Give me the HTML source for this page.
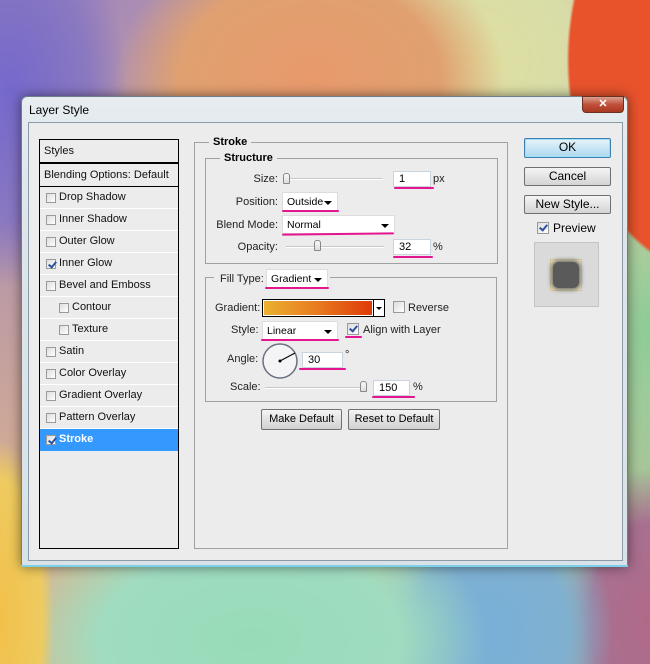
<!DOCTYPE html>
<html><head><style>
*{margin:0;padding:0;box-sizing:border-box}
body{width:650px;height:664px;overflow:hidden;position:relative;font-family:"Liberation Sans",sans-serif;font-size:11px;color:#000;
background:
radial-gradient(ellipse 155px 220px at 720px 60px,#e8532c 0,#e8532c 97%,transparent 99%),
radial-gradient(ellipse 260px 200px at 310px 80px,#e89a6c 0,#e0a070 50%,transparent 75%),
radial-gradient(ellipse 220px 200px at 470px 60px,#dfe0a0 0,#d8dca8 50%,transparent 80%),
radial-gradient(ellipse 130px 220px at 10px 90px,#7468cc 0,#8a78c0 60%,transparent 90%),
radial-gradient(ellipse 60px 200px at 0px 620px,#f2c04a 0,#eecb60 70%,transparent 90%),
radial-gradient(ellipse 250px 150px at 250px 640px,#96dcb8 0,#a0dcc0 60%,transparent 95%),
radial-gradient(ellipse 130px 150px at 490px 630px,#78b0d8 0,#80b0d0 60%,transparent 95%),
radial-gradient(ellipse 100px 160px at 650px 620px,#b06a88 0,#a87090 60%,transparent 95%),
radial-gradient(ellipse 80px 200px at 650px 330px,#8ccc98 0,transparent 90%),
linear-gradient(135deg,#9a80c0,#d8b090 40%,#c8d0a0 70%,#90b890);}
.a{position:absolute}
.frame{left:21px;top:96px;width:607px;height:471px;border-radius:6px 6px 3px 3px;background:linear-gradient(180deg,#e6ecf0,#dde5ea 30%,#d8e2e8);border:1px solid #6d7f8c;box-shadow:0 0 12px rgba(0,0,0,.5);}
.frame:after{content:"";position:absolute;left:-1px;right:-1px;bottom:-1px;height:4px;border-bottom:2px solid #7cd0e8}
.panel{left:28px;top:122px;width:595px;height:439px;background:#ececec;border:1px solid #8a9aa6;}
.title{left:29px;top:103px;font-size:12px;color:#000}
.close{left:582px;top:96px;width:42px;height:17px;border-radius:0 0 4px 4px;background:linear-gradient(#dba091,#c0503a 50%,#a83820);border:1px solid #6a3020;color:#fff;font-weight:bold;font-size:11px;text-align:center;line-height:15px}
.list{left:39px;top:139px;width:140px;height:410px;border:1px solid #000;background:#ececec}
.row{position:absolute;left:0;width:138px;height:22px;border-bottom:1px solid #fff;line-height:21px;padding-left:19px;font-size:11px;color:#111}
.cb{position:absolute;width:10px;height:10px;border:1px solid #9a9a9a;background:linear-gradient(135deg,#ddd,#fff)}
.cb.on:after{content:"";position:absolute;left:3px;top:0px;width:3px;height:6px;border:solid #2c4fa0;border-width:0 2px 2px 0;transform:rotate(40deg)}
.grp{border:1px solid #a0a0a0}
.lg{position:absolute;background:#ececec;font-weight:bold;font-size:11px;padding:0 4px;line-height:12px}
.lbl{position:absolute;font-size:11px;color:#222;text-align:right;line-height:12px}
.inp{position:absolute;background:#fff;border:1px solid #c8d4e0;font-size:11px;padding-left:5px;line-height:14px}
.dd{position:absolute;background:#fff;border:1px solid #ddd;font-size:10.5px;padding-left:4px;line-height:18px}
.dd:after{content:"";position:absolute;right:5px;top:8px;border:4px solid transparent;border-top:4px solid #000;border-bottom:0}
.ul{position:absolute;height:2px;background:#e3158f;border-radius:1px}
.track{position:absolute;height:2px;background:#c8c8c8;border-bottom:1px solid #fff}
.thumb{position:absolute;width:7px;height:11px;border:1px solid #888;border-radius:3px 3px 1px 1px;background:linear-gradient(#fafafa,#ddd)}
.btn{position:absolute;border:1px solid #707070;border-radius:2px;background:linear-gradient(#f4f4f4,#e4e4e4 50%,#d4d4d4);text-align:center;font-size:12px;line-height:17px;color:#000}
.sbtn{position:absolute;border:1px solid #707070;border-radius:2px;background:linear-gradient(#f4f4f4,#e2e2e2 50%,#d2d2d2);text-align:center;font-size:11px;line-height:19px}
</style></head><body>
<div class="a frame"></div>
<div class="a title">Layer Style</div>
<div class="a close">✕</div>
<div class="a panel"></div>

<div class="a list">
<div class="row" style="top:0;height:24px;padding-left:4px;border-bottom:2px solid #000;line-height:22px">Styles</div>
<div class="row" style="top:25px;height:22px;padding-left:4px;border-bottom:1px solid #000;line-height:21px">Blending Options: Default</div>
<div class="row" style="top:47px"><span class="cb" style="left:6px;top:6px"></span>Drop Shadow</div>
<div class="row" style="top:69px"><span class="cb" style="left:6px;top:6px"></span>Inner Shadow</div>
<div class="row" style="top:91px"><span class="cb" style="left:6px;top:6px"></span>Outer Glow</div>
<div class="row" style="top:113px"><span class="cb on" style="left:6px;top:6px"></span>Inner Glow</div>
<div class="row" style="top:135px"><span class="cb" style="left:6px;top:6px"></span>Bevel and Emboss</div>
<div class="row" style="top:157px;padding-left:32px"><span class="cb" style="left:19px;top:6px"></span>Contour</div>
<div class="row" style="top:179px;padding-left:32px"><span class="cb" style="left:19px;top:6px"></span>Texture</div>
<div class="row" style="top:201px"><span class="cb" style="left:6px;top:6px"></span>Satin</div>
<div class="row" style="top:223px"><span class="cb" style="left:6px;top:6px"></span>Color Overlay</div>
<div class="row" style="top:245px"><span class="cb" style="left:6px;top:6px"></span>Gradient Overlay</div>
<div class="row" style="top:267px"><span class="cb" style="left:6px;top:6px"></span>Pattern Overlay</div>
<div class="row" style="top:289px;background:#3399ff;color:#fff;font-weight:bold;border-bottom:none"><span class="cb on" style="left:6px;top:6px"></span>Stroke</div>
</div>

<div class="a grp" style="left:194px;top:142px;width:314px;height:407px"></div>
<div class="lg" style="left:209px;top:136px">Stroke</div>
<div class="a grp" style="left:205px;top:158px;width:293px;height:106px"></div>
<div class="lg" style="left:220px;top:152px">Structure</div>

<div class="lbl" style="left:200px;width:78px;top:173px">Size:</div>
<div class="track" style="left:285px;top:178px;width:98px"></div>
<div class="thumb" style="left:283px;top:173px"></div>
<div class="inp" style="left:393px;top:171px;width:38px;height:16px">1</div>
<div class="lbl" style="left:433px;top:173px">px</div>
<div class="ul" style="left:394px;top:187px;width:40px"></div>

<div class="lbl" style="left:200px;width:78px;top:196px">Position:</div>
<div class="dd" style="left:282px;top:192px;width:56px;height:19px">Outside</div>
<div class="ul" style="left:282px;top:210px;width:57px"></div>

<div class="lbl" style="left:200px;width:78px;top:219px">Blend Mode:</div>
<div class="dd" style="left:282px;top:215px;width:113px;height:19px">Normal</div>
<div class="ul" style="left:282px;top:233px;width:112px;transform:rotate(-0.6deg)"></div>

<div class="lbl" style="left:200px;width:78px;top:241px">Opacity:</div>
<div class="track" style="left:286px;top:246px;width:98px"></div>
<div class="thumb" style="left:314px;top:240px"></div>
<div class="inp" style="left:393px;top:239px;width:38px;height:16px">32</div>
<div class="lbl" style="left:433px;top:241px">%</div>
<div class="ul" style="left:393px;top:256px;width:40px"></div>

<div class="a grp" style="left:205px;top:277px;width:292px;height:125px"></div>
<div class="a" style="left:214px;top:270px;width:116px;height:20px;background:#ececec"></div>
<div class="lbl" style="left:220px;top:273px">Fill Type:</div>
<div class="dd" style="left:266px;top:269px;width:62px;height:19px">Gradient</div>
<div class="ul" style="left:265px;top:287px;width:64px"></div>

<div class="lbl" style="left:215px;top:302px">Gradient:</div>
<div class="a" style="left:262px;top:299px;width:123px;height:18px;border:1px solid #000;background:#fff"></div>
<div class="a" style="left:264px;top:301px;width:108px;height:14px;background:linear-gradient(90deg,#ebb030,#e87a20 50%,#de3a08)"></div>
<div class="a" style="left:373px;top:300px;width:1px;height:16px;background:#000"></div>
<div class="a" style="left:376px;top:307px;border:3px solid transparent;border-top:3px solid #000;border-bottom:0"></div>
<span class="cb" style="left:393px;top:301px;width:12px;height:12px"></span>
<div class="lbl" style="left:408px;top:302px">Reverse</div>

<div class="lbl" style="left:231px;top:324px">Style:</div>
<div class="dd" style="left:262px;top:321px;width:76px;height:19px">Linear</div>
<div class="ul" style="left:261px;top:339px;width:78px"></div>
<span class="cb on" style="left:347px;top:323px;width:12px;height:12px"></span>
<div class="ul" style="left:345px;top:336px;width:17px"></div>
<div class="lbl" style="left:363px;top:324px">Align with Layer</div>

<div class="lbl" style="left:227px;top:353px">Angle:</div>
<svg class="a" style="left:261px;top:342px" width="38" height="38"><circle cx="19" cy="19" r="17" fill="#f4f4f6" stroke="#6a7082" stroke-width="1.5"/><line x1="19" y1="19" x2="34" y2="11" stroke="#000" stroke-width="1"/><circle cx="19" cy="19" r="1.5"/></svg>
<div class="inp" style="left:302px;top:352px;width:41px;height:16px">30</div>
<div class="lbl" style="left:345px;top:349px">°</div>
<div class="ul" style="left:299px;top:368px;width:47px"></div>

<div class="lbl" style="left:230px;top:381px">Scale:</div>
<div class="track" style="left:265px;top:387px;width:102px"></div>
<div class="thumb" style="left:360px;top:381px"></div>
<div class="inp" style="left:373px;top:380px;width:37px;height:16px">150</div>
<div class="lbl" style="left:413px;top:381px">%</div>
<div class="ul" style="left:372px;top:396px;width:43px"></div>

<div class="sbtn" style="left:261px;top:409px;width:81px;height:21px">Make Default</div>
<div class="sbtn" style="left:348px;top:409px;width:92px;height:21px">Reset to Default</div>

<div class="btn" style="left:524px;top:138px;width:87px;height:20px;border-color:#3c7fb1;box-shadow:inset 0 0 0 1px #9ee0f8;background:linear-gradient(#e8f4fa,#c8e6f4 50%,#b0d8ee)">OK</div>
<div class="btn" style="left:524px;top:167px;width:87px;height:19px">Cancel</div>
<div class="btn" style="left:524px;top:195px;width:87px;height:19px">New Style...</div>
<span class="cb on" style="left:537px;top:222px;width:12px;height:12px"></span>
<div class="a" style="left:553px;top:221px;font-size:12px">Preview</div>
<div class="a" style="left:534px;top:242px;width:65px;height:65px;background:#dadada;border:1px solid #c4c4c4"></div>
<div class="a" style="left:550px;top:259px;width:32px;height:32px;background:#ece0b8;border:1px solid #d8c898"></div>
<div class="a" style="left:553px;top:262px;width:26px;height:26px;background:#5a5a5a;border-radius:6px;box-shadow:0 0 4px 2px #707070"></div>
</body></html>
